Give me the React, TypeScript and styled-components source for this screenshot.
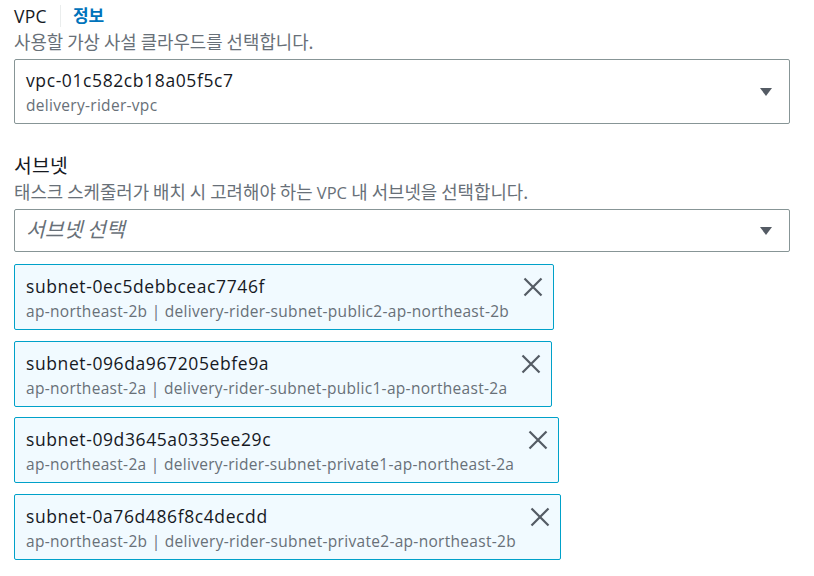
import React from "react";
import styled, { createGlobalStyle } from "styled-components";

const GlobalStyle = createGlobalStyle`
  html, body {
    margin: 0;
    padding: 0;
    background: #ffffff;
  }
  body {
    font-family: "Open Sans", "Noto Sans CJK KR", sans-serif;
    color: #16191f;
  }
`;

const Page = styled.div`
  padding: 4px 24px 0 14px;
  display: flex;
  flex-direction: column;
`;

const Field = styled.section<{ $spaced?: boolean }>`
  display: flex;
  flex-direction: column;
  margin-top: ${(p) => (p.$spaced ? "30px" : "0")};
`;

const Hangul = styled.span<{ $scale?: number }>`
  font-family: "Noto Sans CJK KR", sans-serif;
  font-size: ${(p) => p.$scale ?? 1.08}em;
  line-height: 1;
`;

const LabelRow = styled.div`
  display: flex;
  align-items: center;
  height: 24px;
`;

const Label = styled.span`
  font-size: 17.5px;
  line-height: 24px;
  color: #16191f;
  letter-spacing: 0.3px;
`;

const Divider = styled.span`
  width: 1px;
  height: 22px;
  background: #eaeded;
  margin: 0 12px 0 13px;
`;

const InfoLink = styled.a`
  font-size: 17px;
  line-height: 24px;
  font-weight: 700;
  color: #0073bb;
  text-decoration: none;
  cursor: pointer;
`;

const Description = styled.div`
  font-size: 16.5px;
  line-height: 26px;
  height: 26px;
  padding-top: 2px;
  margin-bottom: 3px;
  color: #687078;
  white-space: nowrap;
`;

const SelectBox = styled.div`
  display: flex;
  align-items: center;
  border: 1px solid #879596;
  border-radius: 2px;
  background: #ffffff;
  padding: 0 17px 0 11px;
`;

const ValueCol = styled.div<{ $token?: boolean }>`
  flex: 1;
  display: flex;
  flex-direction: column;
  padding: ${(p) => (p.$token ? "8px 0 6px" : "7px 0 6px")};
`;

const MainText = styled.div`
  font-size: 17.5px;
  line-height: 27px;
  color: #16191f;
  letter-spacing: 0.6px;
  white-space: nowrap;
`;

const SubText = styled.div`
  font-size: 15.5px;
  line-height: 23px;
  color: #687078;
  letter-spacing: 0.3px;
  white-space: nowrap;
`;

const Placeholder = styled.div`
  flex: 1;
  font-size: 17.5px;
  line-height: 41px;
  height: 41px;
  font-style: italic;
  color: #687078;
`;

const Caret = styled.svg`
  width: 12px;
  height: 8px;
  flex-shrink: 0;
`;

const TokenList = styled.div`
  display: flex;
  flex-direction: column;
  align-items: flex-start;
  gap: 10.5px;
  margin-top: 12px;
`;

const Token = styled.div`
  display: flex;
  align-items: flex-start;
  border: 1px solid #00a1c9;
  border-radius: 2px;
  background: #f1faff;
  padding: 0 10px 0 11px;
`;

const DismissButton = styled.button`
  display: flex;
  align-items: center;
  justify-content: center;
  width: 20px;
  height: 20px;
  margin: 12px 0 0 14px;
  padding: 0;
  border: none;
  background: transparent;
  cursor: pointer;
`;

const CaretDown = () => (
  <Caret viewBox="0 0 12 8" aria-hidden="true">
    <path d="M0 0 H12 L6 8 Z" fill="#545b64" />
  </Caret>
);

const CloseIcon = () => (
  <svg width="20" height="20" viewBox="0 0 20 20" aria-hidden="true">
    <path
      d="M1.5 1.5 L18.5 18.5 M18.5 1.5 L1.5 18.5"
      stroke="#545b64"
      strokeWidth="2.2"
      fill="none"
    />
  </svg>
);

const subnets = [
  {
    id: "subnet-0ec5debbceac7746f",
    desc: "ap-northeast-2b | delivery-rider-subnet-public2-ap-northeast-2b",
  },
  {
    id: "subnet-096da967205ebfe9a",
    desc: "ap-northeast-2a | delivery-rider-subnet-public1-ap-northeast-2a",
  },
  {
    id: "subnet-09d3645a0335ee29c",
    desc: "ap-northeast-2a | delivery-rider-subnet-private1-ap-northeast-2a",
  },
  {
    id: "subnet-0a76d486f8c4decdd",
    desc: "ap-northeast-2b | delivery-rider-subnet-private2-ap-northeast-2b",
  },
];

export default function App() {
  return (
    <>
      <GlobalStyle />
      <Page>
        <Field>
          <LabelRow>
            <Label>VPC</Label>
            <Divider />
            <InfoLink>정보</InfoLink>
          </LabelRow>
          <Description>
            <Hangul>사용할 가상 사설 클라우드를 선택합니다.</Hangul>
          </Description>
          <SelectBox>
            <ValueCol>
              <MainText>vpc-01c582cb18a05f5c7</MainText>
              <SubText>delivery-rider-vpc</SubText>
            </ValueCol>
            <CaretDown />
          </SelectBox>
        </Field>

        <Field $spaced>
          <LabelRow>
            <Label>
              <Hangul $scale={1.1}>서브넷</Hangul>
            </Label>
          </LabelRow>
          <Description>
            <Hangul>태스크 스케줄러가 배치 시 고려해야 하는</Hangul> VPC{" "}
            <Hangul>내 서브넷을 선택합니다.</Hangul>
          </Description>
          <SelectBox>
            <Placeholder>
              <Hangul $scale={1.17}>서브넷 선택</Hangul>
            </Placeholder>
            <CaretDown />
          </SelectBox>
          <TokenList>
            {subnets.map((s) => (
              <Token key={s.id}>
                <ValueCol $token>
                  <MainText>{s.id}</MainText>
                  <SubText>{s.desc}</SubText>
                </ValueCol>
                <DismissButton aria-label="제거">
                  <CloseIcon />
                </DismissButton>
              </Token>
            ))}
          </TokenList>
        </Field>
      </Page>
    </>
  );
}
